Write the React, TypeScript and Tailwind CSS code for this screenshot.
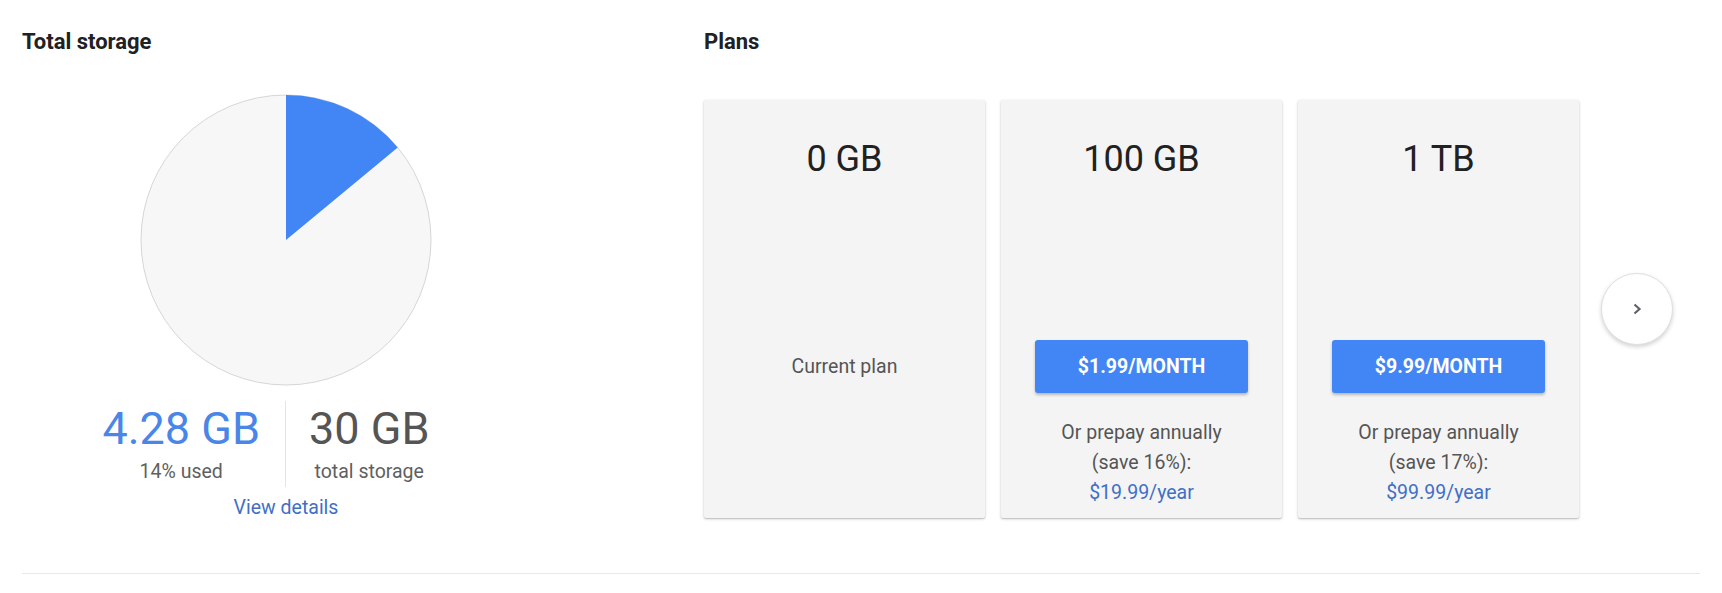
import React from 'react'

const plans = [
  { size: '0 GB', current: true },
  { size: '100 GB', price: '$1.99/MONTH', save: '16%', year: '$19.99/year' },
  { size: '1 TB', price: '$9.99/MONTH', save: '17%', year: '$99.99/year' },
]

// pie for used storage (14%)
function StoragePie({ percent }: { percent: number }) {
  const r = 145
  const c = 146
  const a = (percent / 100) * Math.PI * 2
  const x = c + r * Math.sin(a)
  const y = c - r * Math.cos(a)
  return (
    <svg width="292" height="292" viewBox="0 0 292 292">
      <circle cx={c} cy={c} r={r} fill="#f7f7f7" stroke="#d6d6d6" strokeWidth="1" />
      <path d={`M${c} ${c} L${c} ${c - r} A${r} ${r} 0 0 1 ${x} ${y} Z`} fill="#4285f4" />
    </svg>
  )
}

function PlanCard({ plan }: { plan: (typeof plans)[number] }) {
  return (
    <div className="w-[281px] h-[418px] bg-[#f4f4f4] rounded-[2px] shadow-[0_1px_3px_rgba(0,0,0,0.22),0_1px_1px_rgba(0,0,0,0.1)] flex flex-col items-center">
      <div className="pt-[38px] text-[36px] leading-[42px] text-[#212121]">{plan.size}</div>
      <div className="mt-[160px] h-[53px] flex items-center justify-center">
        {plan.current ? (
          <span className="text-[19.5px] text-[#555]">Current plan</span>
        ) : (
          <button className="w-[213px] h-[53px] bg-[#4285f4] rounded-[3px] shadow-[0_2px_3px_rgba(0,0,0,0.25)] text-white text-[19.5px] font-bold">
            {plan.price}
          </button>
        )}
      </div>
      {!plan.current && (
        <div className="mt-[25px] text-center text-[19.5px] leading-[30px] text-[#555]">
          <div>Or prepay annually</div>
          <div>(save {plan.save}):</div>
          <div className="text-[#3f6fc6]">{plan.year}</div>
        </div>
      )}
    </div>
  )
}

export default function App() {
  return (
    <div className="w-[1722px] h-[593px] bg-white px-[22px] pt-[29px] font-['Roboto','Liberation_Sans',sans-serif]">
      <div className="flex border-b border-[#e8e8e8] h-[545px]">
        {/* 左側：總容量 */}
        <div className="w-[528px] shrink-0">
          <h2 className="text-[22px] leading-[26px] font-bold text-[#202124]">Total storage</h2>
          <div className="mt-[39px] flex justify-center">
            <StoragePie percent={14} />
          </div>
          <div className="mt-[15px] grid grid-cols-2">
            <div className="flex justify-end pr-[25px] border-r border-[#e3e3e3]">
              <div className="text-center">
                <div className="text-[45px] leading-[56px] text-[#4a86e8]">4.28 GB</div>
                <div className="text-[19.5px] leading-[30px] text-[#5f5f5f]">14% used</div>
              </div>
            </div>
            <div className="flex justify-start pl-[23px]">
              <div className="text-center">
                <div className="text-[45px] leading-[56px] text-[#555]">30 GB</div>
                <div className="text-[19.5px] leading-[30px] text-[#5f5f5f]">total storage</div>
              </div>
            </div>
          </div>
          <div className="mt-[8px] text-center text-[19.5px] leading-[26px] text-[#3f6fc6]">View details</div>
        </div>

        {/* 右側：方案 */}
        <div className="ml-[154px] flex-1">
          <h2 className="text-[22px] leading-[26px] font-bold text-[#202124]">Plans</h2>
          <div className="mt-[45px] flex items-center gap-[16px]">
            {plans.map(p => (
              <PlanCard key={p.size} plan={p} />
            ))}
            <button className="ml-[6px] w-[72px] h-[72px] rounded-full bg-white border border-[#e0e0e0] shadow-[0_2px_4px_rgba(0,0,0,0.18)] flex items-center justify-center">
              <svg width="10" height="12" viewBox="0 0 10 12">
                <path d="M2.5 1.5 L7.5 6 L2.5 10.5" fill="none" stroke="#5f6368" strokeWidth="2.2" />
              </svg>
            </button>
          </div>
        </div>
      </div>
    </div>
  )
}
